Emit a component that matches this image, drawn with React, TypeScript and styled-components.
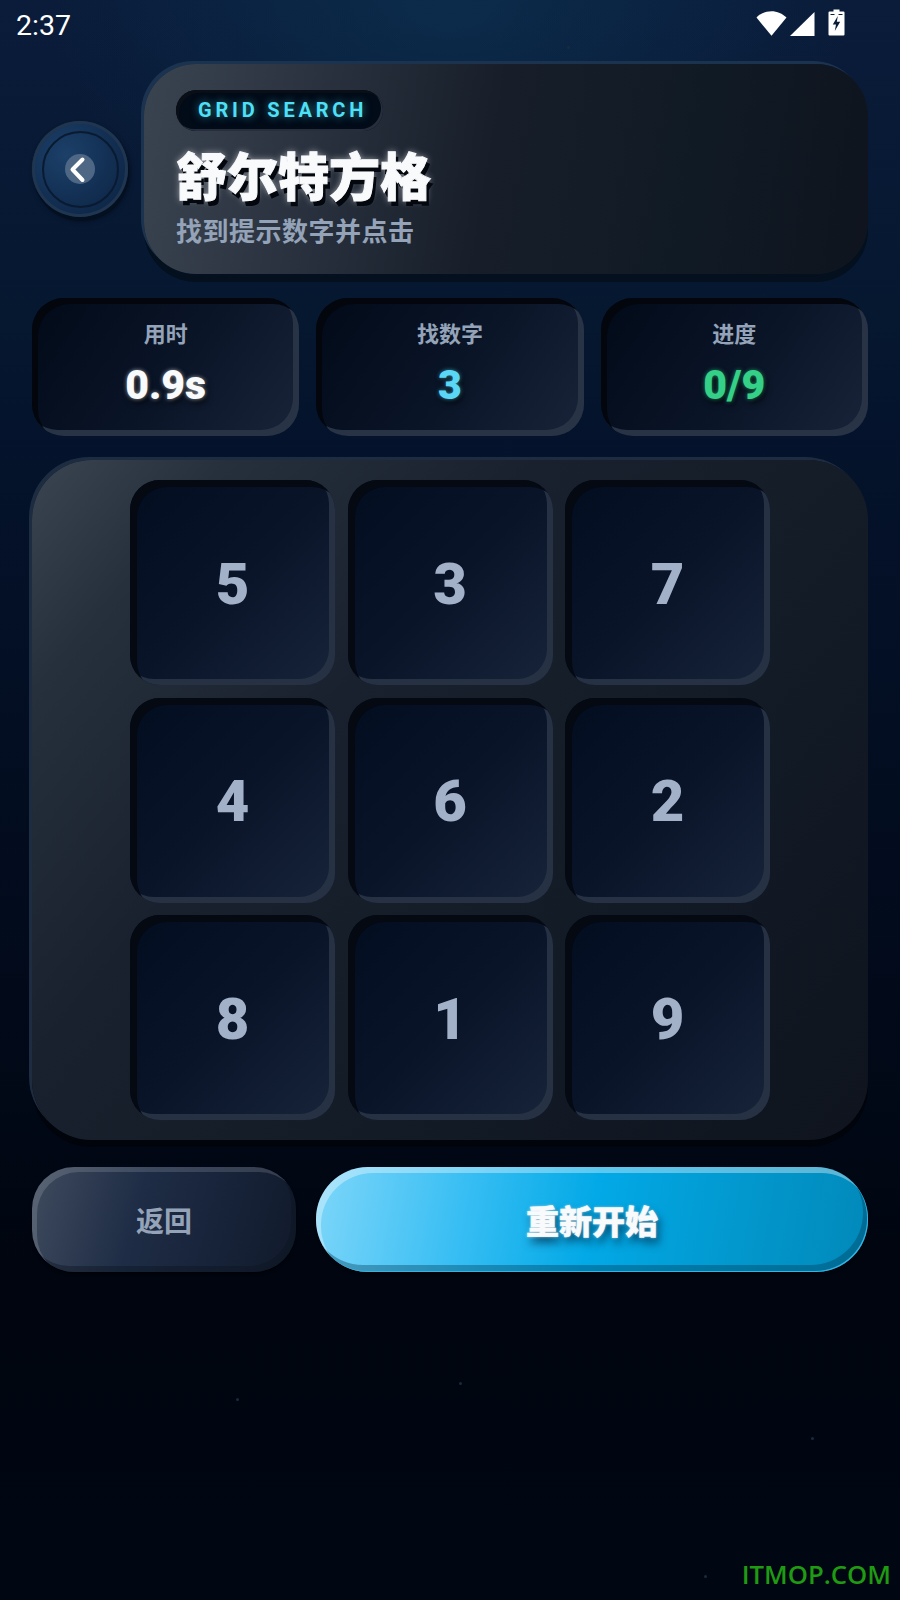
import React from "react";
import styled, { createGlobalStyle } from "styled-components";

const cjk = `Roboto, "Noto Sans CJK SC", sans-serif`;

const GlobalStyle = createGlobalStyle`
  html, body {
    margin: 0;
    padding: 0;
    background: #000612;
  }
  * {
    box-sizing: border-box;
  }
`;

const Page = styled.div`
  position: relative;
  width: 900px;
  height: 1600px;
  overflow: hidden;
  padding: 0 32px;
  font-family: ${cjk};
  background:
    radial-gradient(ellipse 400px 260px at 450px 0px, rgba(14, 62, 96, 0.45), rgba(14, 62, 96, 0) 100%),
    linear-gradient(180deg, #0a1c3a 0%, #061730 20%, #04122a 30%, #020a1a 62%, #00050f 80%, #000713 100%);
`;

const StatusBar = styled.div`
  height: 50px;
  margin: 0 -32px 14px;
  padding: 7px 55px 0 16px;
  display: flex;
  align-items: flex-start;
  justify-content: space-between;
  color: #fff;
`;

const Clock = styled.span`
  font-family: Roboto, sans-serif;
  font-size: 28.5px;
  line-height: 38px;
`;

const StatusIcons = styled.div`
  display: flex;
  align-items: flex-start;
  margin-top: 3px;
`;

const Header = styled.div`
  display: flex;
  align-items: center;
  gap: 16px;
`;

const BackButton = styled.div`
  flex: none;
  width: 96px;
  height: 96px;
  border-radius: 50%;
  display: flex;
  align-items: center;
  justify-content: center;
  background: radial-gradient(circle at 35% 35%, #1c4069, #0c2444 85%);
  box-shadow:
    inset 0 0 0 3px #1f3550,
    -1px -1px 0 #0b1a2e,
    1px 4px 0 #04101f,
    2px 4px 5px rgba(0, 0, 0, 0.5);
`;

const BackRing = styled.div`
  width: 77px;
  height: 77px;
  border-radius: 50%;
  border: 2px solid #0a1a31;
  display: flex;
  align-items: center;
  justify-content: center;
`;

const BackDot = styled.div`
  width: 30px;
  height: 30px;
  border-radius: 50%;
  background: #4d6785;
  display: flex;
  align-items: center;
  justify-content: center;
`;

const TitleCard = styled.div`
  flex: 1;
  height: 210px;
  padding: 26px 32px 0;
  border-radius: 52px;
  background: linear-gradient(100deg, #3a4450 0%, #2b3340 22%, #171e2a 48%, #101a25 75%, #0f141e 100%);
  box-shadow:
    -3px -3px 0 #1c3350,
    0 8px 0 #04101d;
`;

const Tag = styled.div`
  display: inline-block;
  height: 41px;
  padding: 0 16px 0 22px;
  border-radius: 21px;
  font-family: Roboto, sans-serif;
  font-size: 20px;
  font-weight: 700;
  letter-spacing: 3.8px;
  line-height: 40px;
  color: #4de0f6;
  text-shadow: 0 0 8px rgba(77, 224, 246, 0.55);
  background: #020b18;
  box-shadow:
    inset 3px 3px 0 #0a0e16,
    inset -2px -2px 0 #262e3e;
`;

const Title = styled.h1`
  margin: 15px 0 0;
  font-size: 51px;
  line-height: 66px;
  font-weight: 900;
  color: #f8fafc;
  -webkit-text-stroke: 1px #f8fafc;
  text-shadow:
    3px 5px 0 #04070d,
    0 0 7px rgba(255, 255, 255, 0.6);
`;

const Subtitle = styled.p`
  margin: 2px 0 0;
  font-size: 26px;
  line-height: 36px;
  font-weight: 700;
  letter-spacing: 0.5px;
  color: #94a3b8;
`;

const StatsRow = styled.div`
  display: grid;
  grid-template-columns: repeat(3, 1fr);
  gap: 17px;
  margin-top: 24px;
`;

const Stat = styled.div`
  height: 138px;
  padding-top: 22px;
  text-align: center;
  border-radius: 32px;
  background: linear-gradient(125deg, #020a18 0%, #0a1528 55%, #19243a 100%);
  box-shadow:
    inset 6px 6px 0 #03060d,
    inset -6px -6px 0 #283346;
`;

const StatLabel = styled.div`
  font-size: 22px;
  line-height: 30px;
  font-weight: 700;
  color: #94a3b8;
`;

const StatValue = styled.div<{ $color: string }>`
  margin-top: 10px;
  font-family: Roboto, sans-serif;
  font-size: 41px;
  line-height: 50px;
  font-weight: 900;
  color: ${(p) => p.$color};
  text-shadow:
    0 0 4px ${(p) => p.$color}99,
    2px 4px 6px rgba(0, 0, 0, 0.75);
`;

const Panel = styled.div`
  height: 680px;
  margin-top: 24px;
  padding-top: 20px;
  display: flex;
  justify-content: center;
  border-radius: 60px;
  background: linear-gradient(130deg, #3b4551 0%, #262f3c 14%, #18212d 36%, #121a25 70%, #0f141e 100%);
  box-shadow:
    -3px -3px 0 #1d2c40,
    0 7px 0 #01040b;
`;

const Grid = styled.div`
  width: 640px;
  height: 640px;
  display: grid;
  grid-template-columns: repeat(3, 205px);
  grid-auto-rows: 205px;
  gap: 12.5px;
`;

const Cell = styled.div`
  display: flex;
  align-items: center;
  justify-content: center;
  padding-top: 2px;
  border-radius: 30px;
  font-family: Roboto, sans-serif;
  font-size: 58px;
  font-weight: 900;
  color: #a3b1c8;
  background: linear-gradient(135deg, #030d20 0%, #091429 50%, #18243a 100%);
  box-shadow:
    inset 7px 7px 0 #040912,
    inset -6px -6px 0 #263144;
`;

const Actions = styled.div`
  display: flex;
  gap: 20px;
  margin-top: 27px;
`;

const BackAction = styled.div`
  width: 264px;
  height: 105px;
  display: flex;
  align-items: center;
  justify-content: center;
  border-radius: 42px;
  font-size: 28px;
  font-weight: 700;
  color: #94a3b8;
  background: linear-gradient(105deg, #3f4b5e 0%, #1e2c45 40%, #172339 70%, #111a2b 100%);
  box-shadow:
    inset 5px 5px 0 rgba(255, 255, 255, 0.14),
    inset -5px -6px 0 rgba(10, 20, 30, 0.4),
    0 2px 3px rgba(0, 0, 0, 0.6);
`;

const RestartAction = styled.div`
  flex: 1;
  height: 105px;
  display: flex;
  align-items: center;
  justify-content: center;
  border-radius: 52px;
  font-size: 33px;
  font-weight: 900;
  color: #f8fafc;
  -webkit-text-stroke: 0.5px #f8fafc;
  text-shadow:
    0 0 3px rgba(255, 255, 255, 0.6),
    3px 6px 8px rgba(0, 40, 70, 0.75);
  background: linear-gradient(100deg, #7ed6f9 0%, #35bdf3 28%, #02a9e6 50%, #0295ca 80%, #0189b9 100%);
  box-shadow:
    inset -1px -1px 0 #35b4e2,
    inset 5px 6px 0 rgba(255, 255, 255, 0.36),
    inset -5px -7px 0 rgba(0, 60, 90, 0.38),
    0 2px 3px rgba(0, 0, 0, 0.6);
`;

const Speck = styled.i<{ $x: number; $y: number }>`
  position: absolute;
  left: ${(p) => p.$x}px;
  top: ${(p) => p.$y}px;
  width: 3px;
  height: 3px;
  border-radius: 50%;
  background: #1a2a3c;
`;

const Watermark = styled.div`
  position: absolute;
  right: 9px;
  bottom: 9px;
  font-family: "Open Sans", sans-serif;
  font-size: 25.7px;
  line-height: 32px;
  font-weight: 600;
  color: #1f9a12;
`;

const specks: [number, number][] = [
  [567, 46],
  [236, 1398],
  [811, 1437],
  [459, 1382],
  [704, 1575],
];

const stats = [
  { label: "用时", value: "0.9s", color: "#f8fafc" },
  { label: "找数字", value: "3", color: "#5ad7f5" },
  { label: "进度", value: "0/9", color: "#34d088" },
];

const numbers = [5, 3, 7, 4, 6, 2, 8, 1, 9];

const App = (): JSX.Element => {
  return (
    <Page>
      <GlobalStyle />
      {specks.map(([x, y]) => (
        <Speck key={`${x}-${y}`} $x={x} $y={y} />
      ))}

      <StatusBar>
        <Clock>2:37</Clock>
        <StatusIcons>
          <svg width="31" height="26" viewBox="0 0 31 26">
            <path d="M0.5 7.5C4.5 3.5 10 1.2 15.5 1.2S26.5 3.5 30.5 7.5L15.5 25.8Z" fill="#fff" />
          </svg>
          <svg width="26" height="26" viewBox="0 0 26 26" style={{ marginLeft: 2 }}>
            <path d="M25.5 2V26H1Z" fill="#fff" />
          </svg>
          <svg width="17" height="27" viewBox="0 0 17 27" style={{ marginLeft: 13, marginTop: -1 }}>
            <path
              d="M5.5 0.5H11.5V2.5H15.5Q16.5 2.5 16.5 3.5V25.5Q16.5 26.5 15.5 26.5H1.5Q0.5 26.5 0.5 25.5V3.5Q0.5 2.5 1.5 2.5H5.5Z"
              fill="#fff"
            />
            <path d="M2.5 5H6.5V6H2.5ZM10.5 5H14.5V6H10.5Z" fill="#0a1c36" />
            <path d="M9.8 7L4.8 15.5H8L6.8 22L12.2 12.8H8.8Z" fill="#0a1c36" />
          </svg>
        </StatusIcons>
      </StatusBar>

      <Header>
        <BackButton>
          <BackRing>
            <BackDot>
              <svg width="30" height="30" viewBox="0 0 30 30">
                <path
                  d="M17.5 5.5L7.5 15.5L17.5 26"
                  fill="none"
                  stroke="#fff"
                  strokeWidth="4"
                  strokeLinecap="round"
                  strokeLinejoin="round"
                />
              </svg>
            </BackDot>
          </BackRing>
        </BackButton>
        <TitleCard>
          <Tag>GRID SEARCH</Tag>
          <Title>舒尔特方格</Title>
          <Subtitle>找到提示数字并点击</Subtitle>
        </TitleCard>
      </Header>

      <StatsRow>
        {stats.map((s) => (
          <Stat key={s.label}>
            <StatLabel>{s.label}</StatLabel>
            <StatValue $color={s.color}>{s.value}</StatValue>
          </Stat>
        ))}
      </StatsRow>

      <Panel>
        <Grid>
          {numbers.map((n) => (
            <Cell key={n}>{n}</Cell>
          ))}
        </Grid>
      </Panel>

      <Actions>
        <BackAction>返回</BackAction>
        <RestartAction>重新开始</RestartAction>
      </Actions>

      <Watermark>ITMOP.COM</Watermark>
    </Page>
  );
};

export default App;
